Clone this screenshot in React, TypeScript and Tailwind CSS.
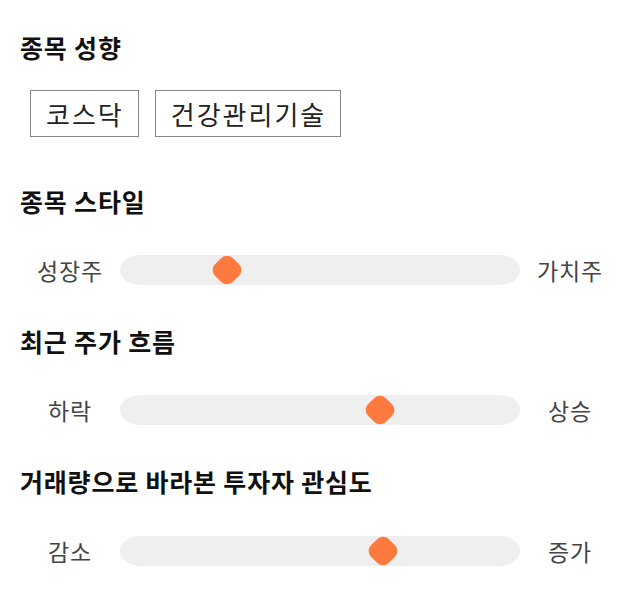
import React from 'react';

const font = { fontFamily: '"Noto Sans CJK KR", "Noto Sans", sans-serif' };

interface SliderRowProps {
  left: string;
  right: string;
  pos: number; // thumb center, px from track start
}

const SliderRow: React.FC<SliderRowProps> = ({ left, right, pos }) => (
  <div className="flex items-center h-[30px]">
    <span className="w-[100px] text-center text-[23px] tracking-[0.8px] text-[#444]">{left}</span>
    <div className="relative flex-1 h-[30px] bg-[#efefef] rounded-[20px/15px]">
      <div
        className="absolute top-1/2 w-[25px] h-[25px] -translate-x-1/2 -translate-y-1/2 rotate-45 rounded-[8px] bg-[#ff7a3f]"
        style={{ left: pos }}
      />
    </div>
    <span className="w-[100px] text-center text-[23px] tracking-[0.8px] text-[#444]">{right}</span>
  </div>
);

const Heading: React.FC<{ children: React.ReactNode; className?: string }> = ({ children, className }) => (
  <h2 className={`text-[25px] leading-8 font-bold tracking-[0.8px] text-[#111] ${className ?? ''}`}>{children}</h2>
);

export default function App() {
  return (
    <div className="w-[640px] h-[606px] bg-white px-5 pt-[31px]" style={font}>
      <Heading>종목 성향</Heading>
      <div className="flex gap-4 pl-[10px] mt-[27px]">
        {['코스닥', '건강관리기술'].map((t) => (
          <span
            key={t}
            className="h-[47px] pl-[15px] pr-[14px] flex items-center justify-center border border-[#888] text-[26px] tracking-[2px] text-[#222]"
          >
            {t}
          </span>
        ))}
      </div>

      <Heading className="mt-[48px]">종목 스타일</Heading>
      <div className="mt-[38px]">
        <SliderRow left="성장주" right="가치주" pos={106.5} />
      </div>

      <Heading className="mt-[40px]">최근 주가 흐름</Heading>
      <div className="mt-[38px]">
        <SliderRow left="하락" right="상승" pos={260} />
      </div>

      <Heading className="mt-[40px]">거래량으로 바라본 투자자 관심도</Heading>
      <div className="mt-[39px]">
        <SliderRow left="감소" right="증가" pos={263} />
      </div>
    </div>
  );
}
